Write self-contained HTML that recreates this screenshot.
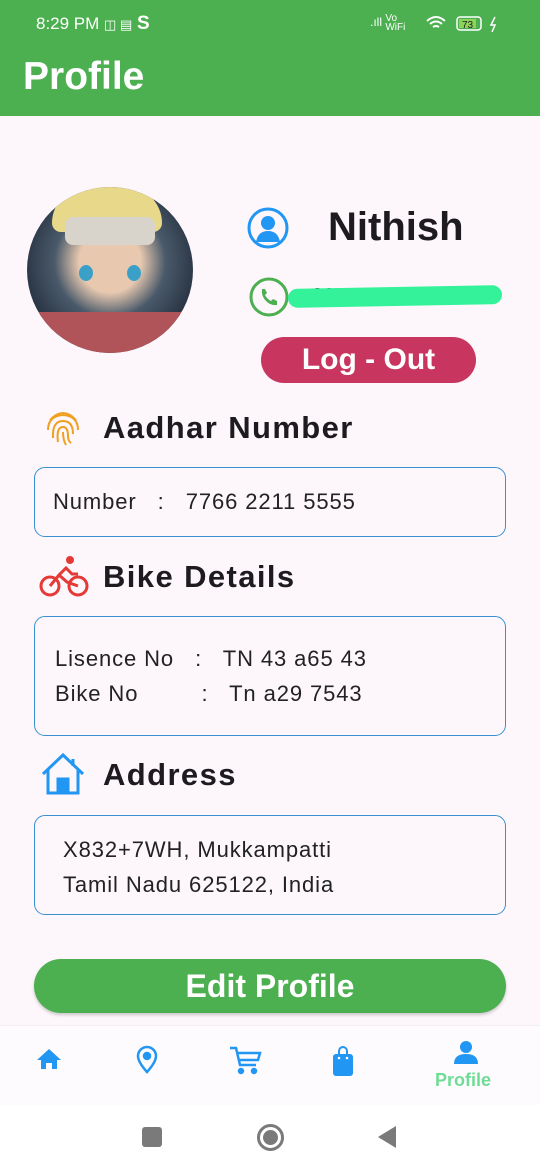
<!DOCTYPE html>
<html><head><meta charset="utf-8"><style>
*{margin:0;padding:0;box-sizing:border-box}
body{width:540px;height:1170px;background:#fdf7fc;font-family:"Liberation Sans",sans-serif;position:relative;overflow:hidden;color:#1d1b20}
.abs{position:absolute}
.box{position:absolute;left:34px;width:472px;border:1.5px solid #3a8fd0;border-radius:11px;background:#fdf7fc;font-size:22px;color:#222;letter-spacing:0.9px}
.h{position:absolute;left:103px;font-size:31px;font-weight:bold;color:#1d1b20;letter-spacing:1.4px}
</style></head><body>
<div class="abs" style="left:0;top:0;width:540px;height:116px;background:#4caf50"></div>
<div class="abs" style="left:36px;top:13px;color:#fff;font-size:17px">8:29 PM <span style="font-size:13px">&#9707; &#9636;</span> <b style="font-size:19px">S</b></div>
<div class="abs" style="left:370px;top:14px;color:#fff;font-size:12px">.ıll <span style="font-size:10px;line-height:9px;display:inline-block;vertical-align:middle">Vo<br>WiFi</span></div>
<svg class="abs" style="left:425px;top:14px" width="80" height="20"><path d="M2 7 Q11 -1 20 7 M5 10 Q11 5 17 10 M8 13 Q11 11 14 13" stroke="#fff" stroke-width="2" fill="none"/><rect x="32" y="3" width="24" height="13" rx="3" stroke="#fff" fill="none" stroke-width="1.5"/><rect x="34" y="5" width="17" height="9" fill="#8bd35a"/><text x="37" y="14" font-size="10" fill="#222" font-family="Liberation Sans">73</text><path d="M70 3 L66 11 L70 11 L67 18" stroke="#fff" stroke-width="1.5" fill="none"/></svg>
<div class="abs" style="left:23px;top:55px;color:#fff;font-size:39px;font-weight:bold">Profile</div>

<div class="abs" style="left:27px;top:187px;width:166px;height:166px;border-radius:50%;background:radial-gradient(circle at 50% 45%,#e8c9b0 0 25%,#4a5a6a 45%,#2a3545 70%);overflow:hidden">
<div class="abs" style="left:25px;top:0;width:110px;height:45px;background:#e8d98a;border-radius:40px 40px 10px 10px"></div>
<div class="abs" style="left:38px;top:30px;width:90px;height:28px;background:#d8d4cc;border-radius:8px"></div>
<div class="abs" style="left:0;top:125px;width:166px;height:50px;background:#b0545a"></div>
<div class="abs" style="left:52px;top:78px;width:14px;height:16px;border-radius:50%;background:#3aa0c8"></div>
<div class="abs" style="left:100px;top:78px;width:14px;height:16px;border-radius:50%;background:#3aa0c8"></div>
</div>

<svg class="abs" style="left:246px;top:206px" width="44" height="44"><circle cx="22" cy="22" r="19" fill="none" stroke="#2196f3" stroke-width="3"/><circle cx="22" cy="17" r="7" fill="#2196f3"/><path d="M10 36 Q12 25 22 25 Q32 25 34 36 Z" fill="#2196f3"/></svg>
<div class="abs" style="left:328px;top:205px;font-size:40px;font-weight:bold">Nithish</div>
<svg class="abs" style="left:248px;top:276px" width="44" height="42"><circle cx="21" cy="21" r="18" fill="none" stroke="#4caf50" stroke-width="3"/><path d="M14 13 Q13 20 18 25 Q23 30 29 29 L29 25 L25 23 L23 25 Q19 23 17 19 L19 17 L17 13 Z" fill="#4caf50"/></svg>
<div class="abs" style="left:312px;top:285px;font-size:20px;font-weight:bold">91191</div>
<div class="abs" style="left:288px;top:287px;width:214px;height:19px;background:#33f29a;border-radius:10px;transform:rotate(-1deg)"></div>

<div class="abs" style="left:261px;top:337px;width:215px;height:46px;background:#c8365f;border-radius:23px;color:#fff;font-size:30px;font-weight:bold;text-align:center;line-height:46px">Log - Out</div>

<svg class="abs" style="left:44px;top:408px" width="38" height="40" fill="none" stroke="#f0a020" stroke-width="2"><path d="M6 12 Q19 -2 32 12"/><path d="M4 22 Q4 8 19 7 Q34 8 34 22"/><path d="M9 30 Q8 13 19 13 Q29 13 29 26"/><path d="M14 34 Q12 19 19 19 Q24 19 24 28 Q24 33 27 35"/><path d="M19 24 Q19 32 22 37"/></svg>
<div class="h" style="top:410px">Aadhar Number</div>
<div class="box" style="top:467px;height:70px;padding:21px 0 0 18px">Number &nbsp; : &nbsp; 7766 2211 5555</div>

<svg class="abs" style="left:39px;top:555px" width="50" height="44" fill="none" stroke="#e53935" stroke-width="3"><circle cx="11" cy="31" r="9"/><circle cx="39" cy="31" r="9"/><circle cx="31" cy="5" r="4" fill="#e53935" stroke="none"/><path d="M11 31 L20 20 L28 27 L39 31 M20 20 L27 13 L33 19 L39 19"/></svg>
<div class="h" style="top:559px">Bike Details</div>
<div class="box" style="top:616px;height:120px;padding:24px 0 0 20px;line-height:35px">Lisence No &nbsp; : &nbsp; TN 43 a65 43<br>Bike No &nbsp; &nbsp; &nbsp; &nbsp; : &nbsp; Tn a29 7543</div>

<svg class="abs" style="left:40px;top:752px" width="46" height="44" fill="none" stroke="#2196f3" stroke-width="3"><path d="M3 22 L23 3 L43 22"/><path d="M8 18 L8 41 L38 41 L38 18"/><rect x="18" y="27" width="10" height="14" fill="#2196f3"/><path d="M33 7 L33 14"/></svg>
<div class="h" style="top:757px">Address</div>
<div class="box" style="top:815px;height:100px;padding:16px 0 0 28px;line-height:35px">X832+7WH, Mukkampatti<br>Tamil Nadu 625122, India</div>

<div class="abs" style="left:34px;top:959px;width:472px;height:54px;background:#4caf50;border-radius:27px;color:#fff;font-size:32px;font-weight:bold;text-align:center;line-height:54px;box-shadow:0 2px 3px rgba(0,0,0,.2)">Edit Profile</div>

<div class="abs" style="left:0;top:1025px;width:540px;height:80px;background:#fefbfe;border-top:1px solid #f3eef3"></div>
<svg class="abs" style="left:36px;top:1047px" width="26" height="24"><path d="M13 2 L25 13 L21 13 L21 22 L16 22 L16 16 L10 16 L10 22 L5 22 L5 13 L1 13 Z" fill="#2196f3"/></svg>
<svg class="abs" style="left:135px;top:1045px" width="24" height="30" fill="none" stroke="#2196f3" stroke-width="2.5"><path d="M12 27 Q3 17 3 11 A9 9 0 0 1 21 11 Q21 17 12 27 Z"/><circle cx="12" cy="11" r="3" fill="#2196f3"/></svg>
<svg class="abs" style="left:228px;top:1045px" width="36" height="30" fill="none" stroke="#2196f3" stroke-width="2.5"><path d="M2 3 L8 3 L12 20 L28 20 M9 8 L32 8 L30 15 L11 15"/><circle cx="13" cy="26" r="2" fill="#2196f3"/><circle cx="26" cy="26" r="2" fill="#2196f3"/></svg>
<svg class="abs" style="left:331px;top:1045px" width="24" height="32"><path d="M8 10 L8 6 A4 4 0 0 1 16 6 L16 10" stroke="#2196f3" stroke-width="2" fill="none"/><rect x="2" y="9" width="20" height="22" rx="3" fill="#2196f3"/><circle cx="8" cy="13" r="1.3" fill="#fff"/><circle cx="16" cy="13" r="1.3" fill="#fff"/></svg>
<svg class="abs" style="left:452px;top:1040px" width="28" height="26"><circle cx="14" cy="7" r="6" fill="#2196f3"/><path d="M2 24 Q2 14 14 14 Q26 14 26 24 Z" fill="#2196f3"/></svg>
<div class="abs" style="left:435px;top:1070px;color:#6fdc96;font-size:18px;font-weight:bold">Profile</div>

<div class="abs" style="left:0;top:1105px;width:540px;height:65px;background:#fff"></div>
<div class="abs" style="left:142px;top:1127px;width:20px;height:20px;background:#7a7a7a;border-radius:3px"></div>
<div class="abs" style="left:257px;top:1124px;width:27px;height:27px;border:3px solid #7a7a7a;border-radius:50%"></div>
<div class="abs" style="left:263px;top:1130px;width:15px;height:15px;background:#7a7a7a;border-radius:50%"></div>
<svg class="abs" style="left:376px;top:1125px" width="22" height="24"><path d="M20 1 L20 23 L2 12 Z" fill="#7a7a7a"/></svg>
</body></html>
